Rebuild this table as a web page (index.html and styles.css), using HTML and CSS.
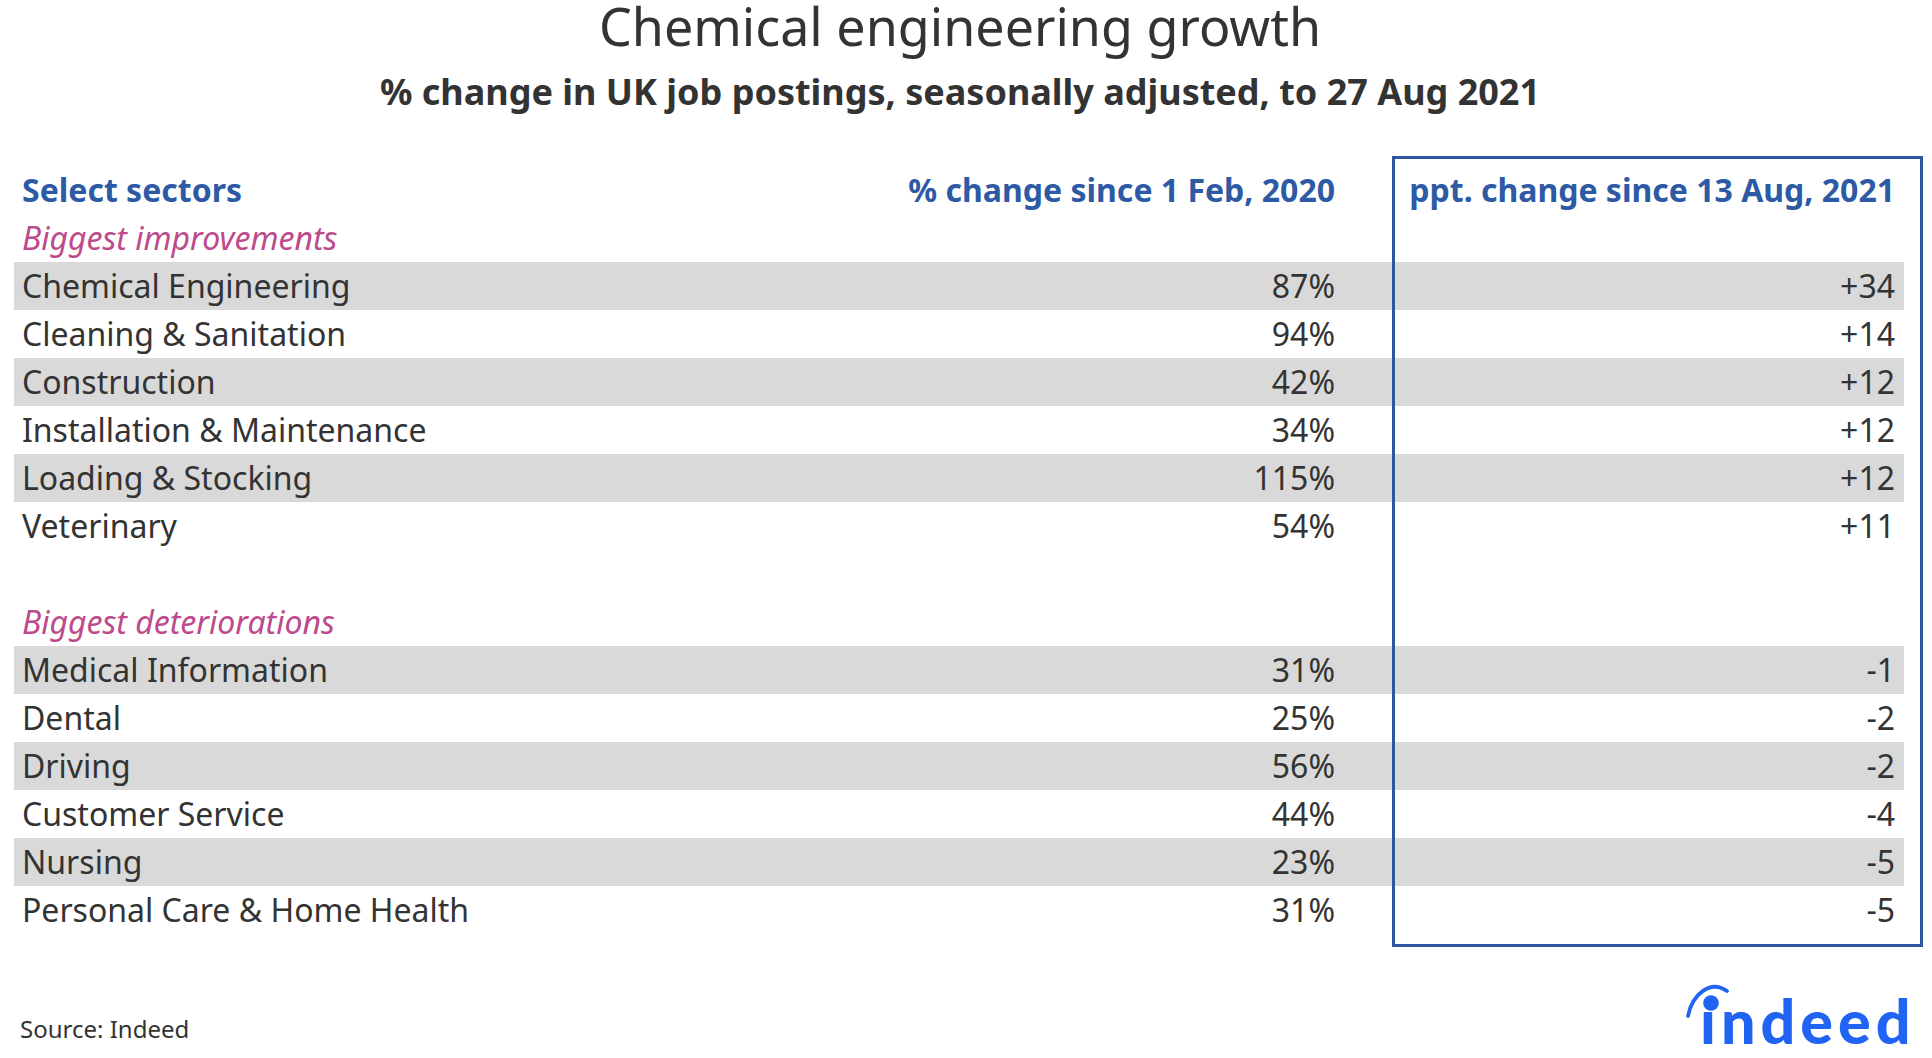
FILE: index.html
```html
<!DOCTYPE html>
<html lang="en">
<head>
<meta charset="utf-8">
<title>Chemical engineering growth</title>
<link rel="stylesheet" href="styles.css">
</head>
<body>
<div class="page">
  <header class="titles">
    <h1 class="title">Chemical engineering growth</h1>
    <h2 class="subtitle">% change in UK job postings, seasonally adjusted, to 27 Aug 2021</h2>
  </header>

  <section class="table">
    <div class="box"></div>
    <div class="row head"><span class="c1">Select sectors</span><span class="c2">% change since 1 Feb, 2020</span><span class="c3">ppt. change since 13 Aug, 2021</span></div>
    <div class="row group"><span class="c1">Biggest improvements</span></div>
    <div class="row alt"><span class="c1">Chemical Engineering</span><span class="c2">87%</span><span class="c3">+34</span></div>
    <div class="row"><span class="c1">Cleaning &amp; Sanitation</span><span class="c2">94%</span><span class="c3">+14</span></div>
    <div class="row alt"><span class="c1">Construction</span><span class="c2">42%</span><span class="c3">+12</span></div>
    <div class="row"><span class="c1">Installation &amp; Maintenance</span><span class="c2">34%</span><span class="c3">+12</span></div>
    <div class="row alt"><span class="c1">Loading &amp; Stocking</span><span class="c2">115%</span><span class="c3">+12</span></div>
    <div class="row"><span class="c1">Veterinary</span><span class="c2">54%</span><span class="c3">+11</span></div>
    <div class="row spacer"></div>
    <div class="row group"><span class="c1">Biggest deteriorations</span></div>
    <div class="row alt"><span class="c1">Medical Information</span><span class="c2">31%</span><span class="c3">-1</span></div>
    <div class="row"><span class="c1">Dental</span><span class="c2">25%</span><span class="c3">-2</span></div>
    <div class="row alt"><span class="c1">Driving</span><span class="c2">56%</span><span class="c3">-2</span></div>
    <div class="row"><span class="c1">Customer Service</span><span class="c2">44%</span><span class="c3">-4</span></div>
    <div class="row alt"><span class="c1">Nursing</span><span class="c2">23%</span><span class="c3">-5</span></div>
    <div class="row"><span class="c1">Personal Care &amp; Home Health</span><span class="c2">31%</span><span class="c3">-5</span></div>
  </section>

  <footer class="footer">
    <div class="source">Source: Indeed</div>
    <div class="logo">
      <svg class="logo-mark" width="230" height="66" viewBox="0 0 230 66" aria-hidden="true">
        <path d="M4 34 C8 13 26 -3 43 9" fill="none" stroke="#2164f3" stroke-width="3.8" stroke-linecap="round"/>
        <circle cx="27" cy="21" r="7.8" fill="#2164f3"/>
      </svg>
      <span class="logo-text">ındeed</span>
    </div>
  </footer>
</div>
</body>
</html>
```

FILE: styles.css
```css
html, body {
  margin: 0;
  padding: 0;
  background: #ffffff;
}

body {
  font-family: "Noto Sans", "Open Sans", sans-serif;
  color: #333333;
}

.page {
  width: 1932px;
  height: 1058px;
  overflow: hidden;
}

.titles {
  padding-right: 12px;
  text-align: center;
}

.title {
  margin: 0;
  font-size: 52px;
  font-weight: 400;
  line-height: 52px;
  color: #333333;
}

.subtitle {
  margin: 16px 0 0;
  font-size: 36px;
  font-weight: 700;
  line-height: 48px;
  color: #333333;
}

.table {
  position: relative;
  margin-top: 40px;
  padding-top: 10px;
  padding-bottom: 13px;
}

.box {
  position: absolute;
  left: 1392px;
  top: 0;
  width: 525px;
  height: 785px;
  border: 3px solid #2e57a2;
}

.row {
  display: grid;
  grid-template-columns: 1fr auto 560px;
  height: 48px;
  margin: 0 28px 0 14px;
  padding: 0 9px 0 8px;
  font-size: 32px;
  line-height: 48px;
  white-space: nowrap;
}

.c2,
.c3 {
  text-align: right;
}

.alt {
  background: #d9d9d9;
}

.head {
  font-weight: 700;
  color: #2d5aa5;
}

.group {
  font-style: italic;
  color: #bd4a8b;
}

.footer {
  display: flex;
  justify-content: space-between;
  align-items: flex-end;
  height: 101px;
  padding: 0 18px 0 20px;
}

.source {
  margin-bottom: 4px;
  font-size: 24px;
  line-height: 30px;
  color: #333333;
}

.logo {
  position: relative;
  width: 230px;
  height: 66px;
}

.logo-mark {
  position: absolute;
  left: 0;
  top: 0;
}

.logo-text {
  display: block;
  padding: 10px 0 0 16px;
  font-family: Lato, "Noto Sans", sans-serif;
  font-size: 61px;
  font-weight: 900;
  line-height: 58px;
  letter-spacing: 5px;
  color: #2164f3;
}
```
